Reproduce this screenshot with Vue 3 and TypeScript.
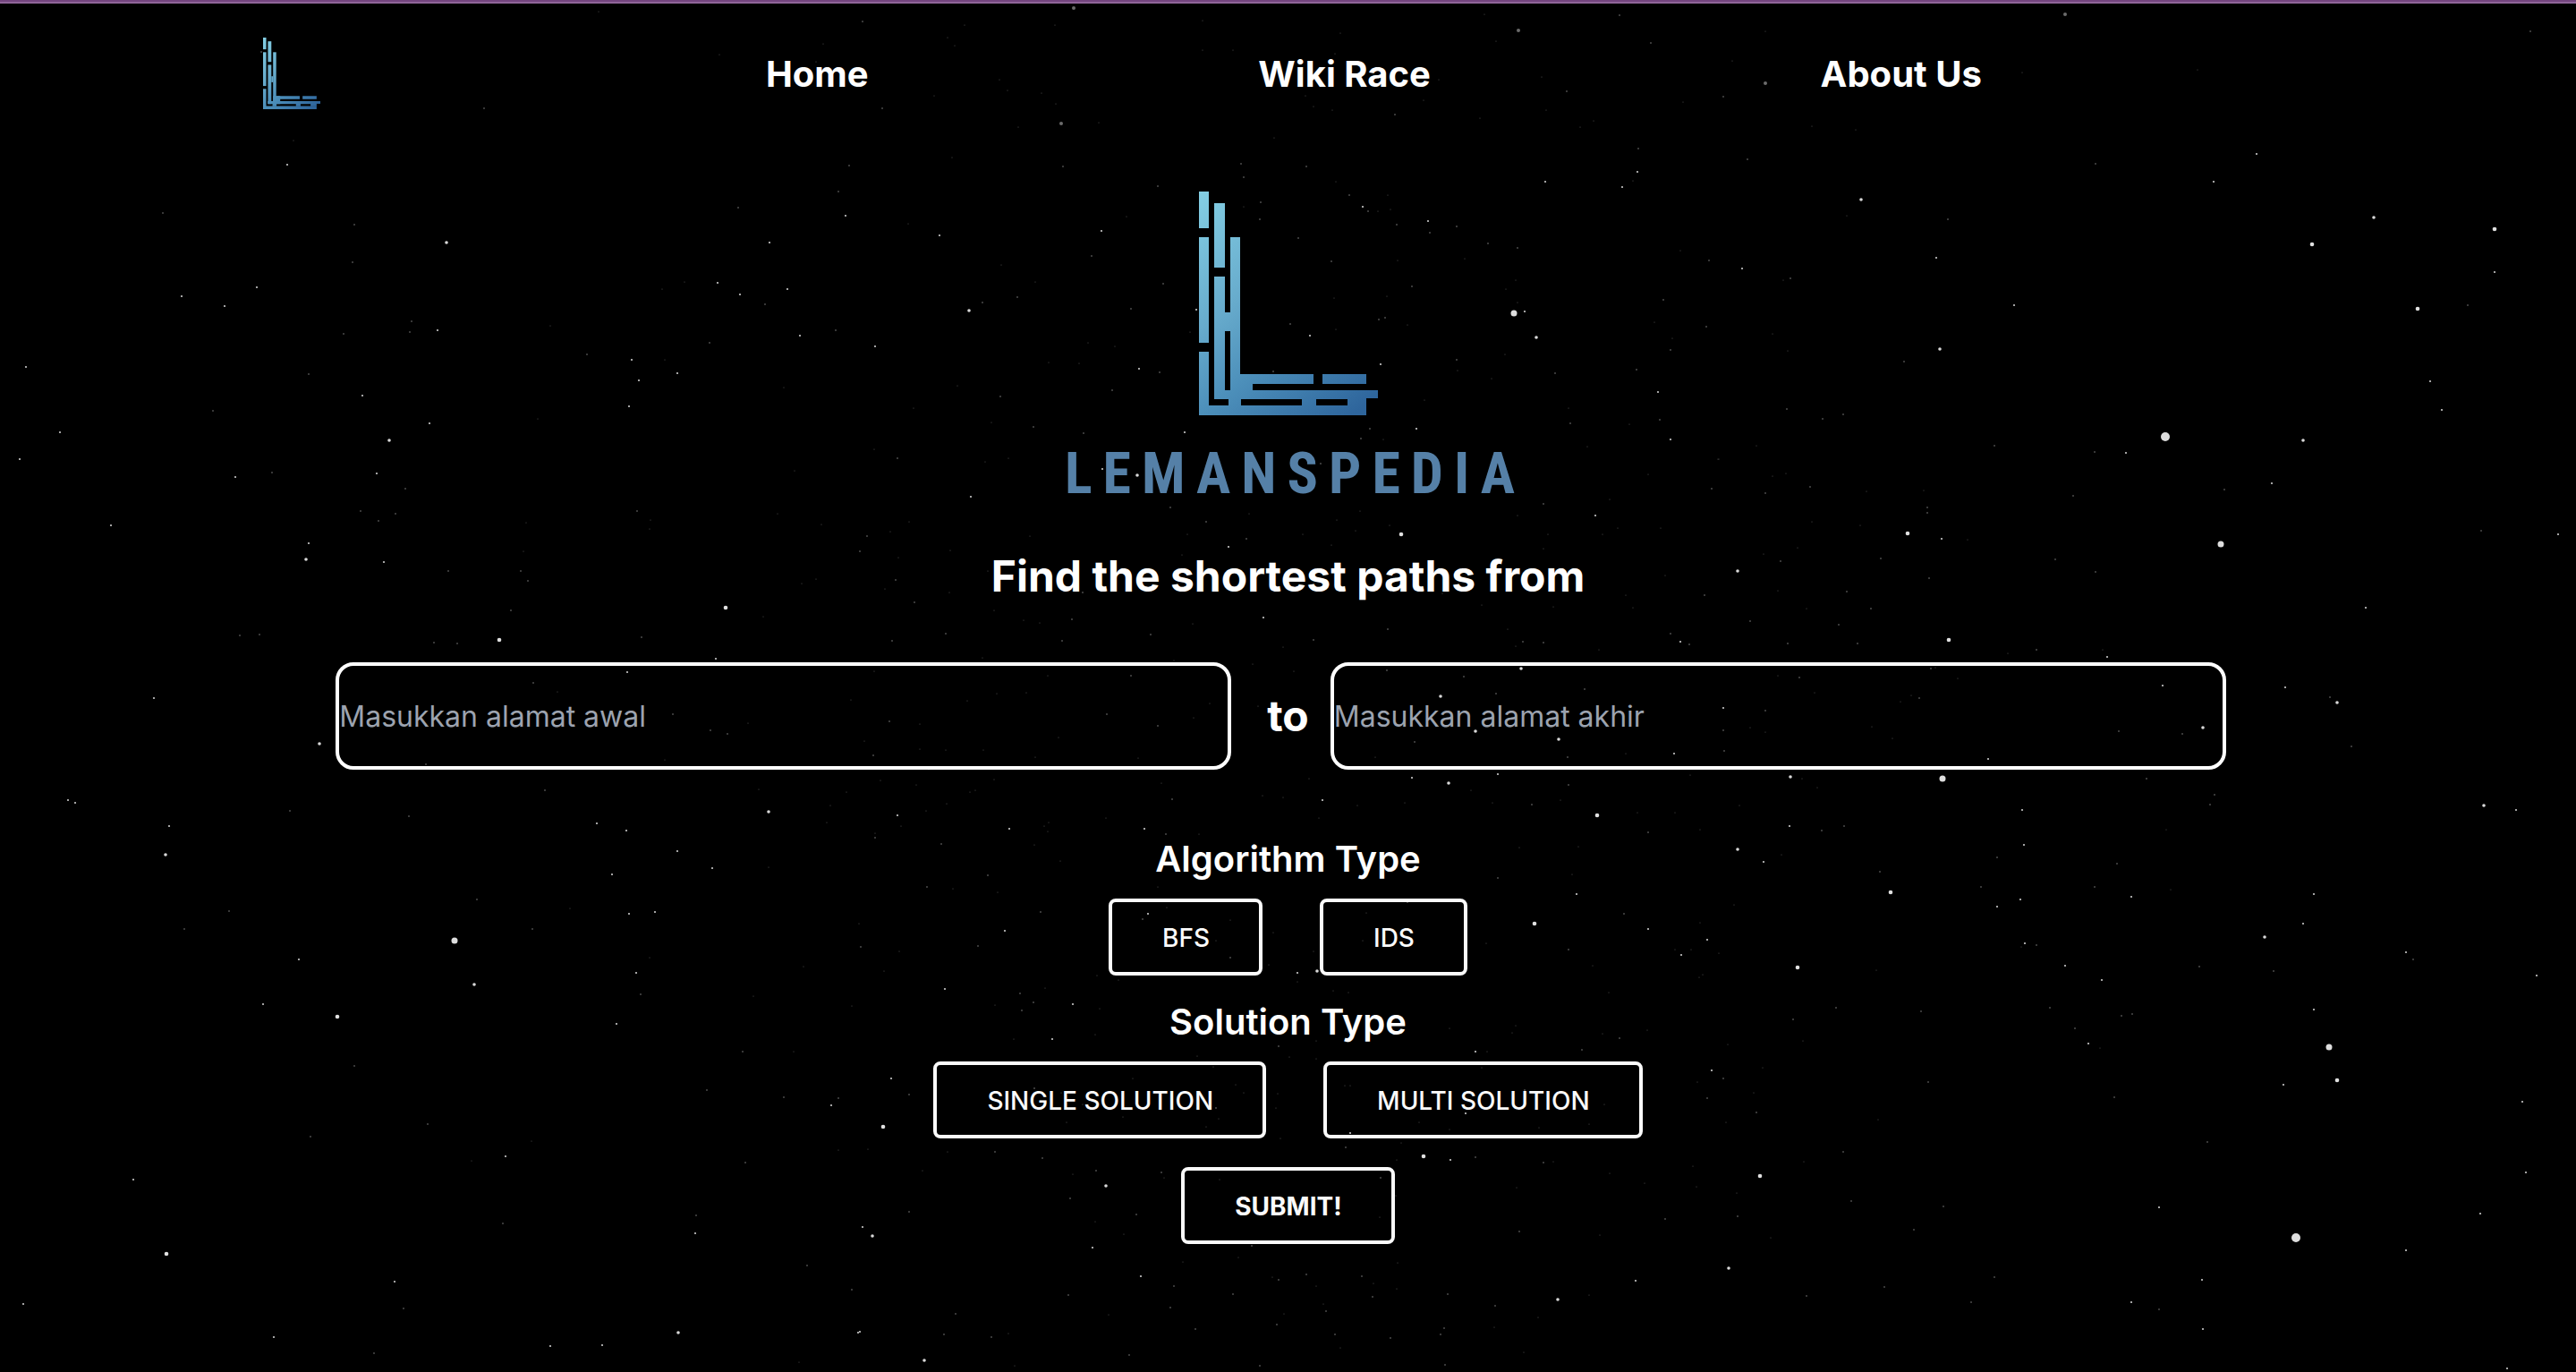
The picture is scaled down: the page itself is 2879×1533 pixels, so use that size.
<script setup lang="ts">
import { ref } from 'vue'

interface Star {
  x: number
  y: number
  r: number
  o: number
}

const from = ref('')
const to = ref('')
const algorithm = ref('')
const solution = ref('')

const links = [
  { label: 'Home', href: '#home' },
  { label: 'Wiki Race', href: '#wiki-race' },
  { label: 'About Us', href: '#about-us' },
]
const algorithms = ['BFS', 'IDS']
const solutions = ['SINGLE SOLUTION', 'MULTI SOLUTION']

// Bars of the emblem: x, y, width, height
const bars = [
  [0, 0, 11, 41], [0, 51, 11, 118], [0, 179, 11, 71],
  [17, 13, 12, 72], [17, 95, 12, 137], [35, 51, 11, 171],
  [29, 135, 6, 21], [46, 204, 82, 11], [138, 204, 49, 11],
  [35, 204, 25, 28], [17, 222, 183, 9], [17, 222, 170, 10],
  [0, 239, 187, 11], [33, 231, 14, 9], [115, 231, 16, 9], [166, 231, 21, 9],
]

// The sky is three tiles wide and two high. Each star is "x y magnitude" on a 1568-unit tile grid.
const GRID = 1568
const TILE_W = 960
const TILE_H = 766
const sky = [
  `1092 26 0,1503 101 0,1314 125 0,1489 141 0,477 118 1,883 247 1,535 321 0,524 377 2,1550 378 1,1530 438 1,1348 474 1,297 487 1,1543 494 2,646 513 1,815 555 3,1405 554 2,643 599 1,1250 644 0,1310 647 2,468 657 2,1208 662 0,1438 662 2,1350 674 2,331 678 2,410 700 2,1397 697 1,752 734 1,1005 746 0,798 755 2,748 760 1,627 764 1,1526 756 1,1460 768 2,1295 785 1,1072 810 1,1153 822 2,1213 823 0,48 839 2,1236 853 2,563 856 1,1166 870 2,1431 886 0,661 904 2,1148 929 2,389 939 1,982 958 0,784 968 2,109 989 2,710 1008 3,36 1050 2,1450 1076 0,497 1080 1,688 1083 2,430 1091 2,740 1118 1,658 1168 1,1163 1169 1,722 1174 1,1419 1174 0,1188 1190 0,691 1192 1,960 1195 0,1500 1199 0,203 1202 2,1186 1209 0,564 1242 2,955 1261 0,558 1280 3,701 1285 2,819 1305 1,950 1306 1,1490 1324 0,963 1328 1,1463 1335 0,1324 1389 4,933 1397 1,1394 1411 0,473 1451 1,437 1454 1,911 1463 4,1171 1458 1,792 1470 1,834 1471 1,1306 1507 2,1145 1537 2,973 1561 1`,
  `392 19 7,1142 32 0,1389 35 1,628 48 0,6 50 1,192 58 0,357 58 0,1204 69 7,879 75 0,162 85 0,1163 94 0,1445 99 1,174 104 0,628 115 0,682 115 0,869 122 0,1247 177 0,256 183 0,1058 183 0,271 206 0,1292 208 1,334 213 0,137 219 0,815 220 0,1031 230 0,1504 234 0,360 237 0,830 243 0,43 247 1,864 252 0,1255 252 0,979 262 1,1133 270 0,1341 277 0,438 281 0,369 283 7,290 290 0,1316 290 0,758 316 0,1423 339 1,170 361 0,698 374 1,372 380 1,817 380 1,1421 392 2,703 406 1,1413 413 0,871 416 0,1252 416 2,546 426 1,1393 428 2,895 447 1,965 447 0,733 462 1,702 472 0,919 473 2,970 480 0,947 484 0,929 484 1,488 496 0,731 502 1,1038 505 2,90 511 0,982 513 1,1091 517 1,442 529 2,1042 533 1,147 538 2,802 545 1,1149 557 1,1202 568 1,1500 573 0,424 586 1,1105 591 0,984 595 0,1552 595 1,863 597 1,259 606 0,1199 640 0,322 644 0,555 648 1,1009 656 1,1181 662 0,289 680 1,963 677 0,868 682 0,1468 685 1,225 692 1,1202 692 0,496 707 1,201 710 3,615 709 2,1215 713 2,1195 717 5,960 727 1,949 730 1,1452 737 0,787 740 1,1001 743 0,1547 747 1,871 753 0,604 760 0,824 768 2,1236 771 3,1484 773 0,418 783 0,467 792 0,30 793 2,1482 801 1,1180 810 0,1091 822 1,347 830 0,401 831 0,952 833 2,512 844 2,1419 846 1,756 850 1,1093 848 0,548 852 1,1270 854 1,1155 865 0,179 883 0,462 893 1,1458 897 2,258 906 1,1033 915 0,100 934 0,1296 934 0,241 967 0,1299 968 1,1406 970 0,1462 961 1,318 977 1,932 981 1,1017 981 2,594 988 2,410 990 1,1482 1005 2,917 1004 1,957 1006 0,1330 1021 0,27 1028 0,70 1048 1,272 1049 0,1568 1050 0,231 1057 0,445 1072 2,508 1087 3,842 1061 1,1440 1084 0,1556 1118 1,204 1137 2,1371 1143 0,1249 1153 1,568 1160 1,914 1169 0,712 1174 0,1202 1179 0,1344 1180 2,872 1190 0,91 1193 0,633 1193 1,968 1201 0,1385 1208 0,1464 1207 0,907 1213 0,57 1215 0,600 1223 0,810 1223 0,989 1222 4,1258 1223 0,1357 1222 0,14 1226 1,312 1226 0,708 1233 1,862 1246 0,674 1250 2,1249 1255 0,2 1260 1,167 1258 0,72 1275 0,590 1270 0,235 1306 0,1471 1316 0,67 1327 1,47 1347 0,409 1355 1,165 1356 0,1065 1358 0,1399 1361 0,1544 1362 1,102 1377 1,1137 1383 0,1268 1387 0,1413 1389 0,247 1397 0,739 1413 2,388 1417 1,301 1418 0,330 1425 0,610 1427 0,966 1439 1,1184 1440 0,158 1449 1,532 1451 1,1481 1450 1,61 1465 1,371 1465 1,829 1464 1,1499 1467 2,1212 1467 1,1250 1469 1,1515 1474 1,775 1479 0,1199 1477 0,1351 1487 0,226 1505 0,718 1518 0,575 1511 0,1209 1530 3,28 1535 0,793 1536 0,963 1534 1,496 1546 1,344 1546 0,1104 1547 1`,
  `633 33 7,87 71 0,1483 72 1,26 139 0,876 160 0,556 166 0,87 191 7,9 222 1,171 288 0,252 296 0,984 353 2,54 365 1,689 374 1,905 415 2,262 456 3,235 494 0,1198 497 3,419 501 1,1418 525 4,1085 558 4,398 589 2,44 615 2,1417 622 2,132 637 1,119 641 0,540 699 2,1368 699 1,1278 706 4,99 764 0,405 798 3,127 803 0,340 827 1,1300 871 2,125 936 1,1321 938 2,228 948 1,191 957 1,816 998 6,1068 1008 3,70 1019 0,504 1020 1,687 1033 1,744 1035 2,2 1050 0,124 1082 0,100 1090 0,1011 1105 2,169 1114 1,925 1119 1,271 1123 0,375 1122 0,86 1128 1,649 1135 1,382 1160 1,382 1172 1,172 1194 0,260 1201 0,1393 1214 1,347 1221 4,1533 1222 2,408 1233 2,456 1234 0,918 1245 5,145 1253 0,84 1268 0,298 1278 1,615 1280 1,115 1284 1,36 1306 3,689 1309 1,386 1323 1,110 1350 0,236 1353 1,1182 1390 2,161 1391 0,279 1391 1,58 1420 1,220 1428 1,422 1464 4,127 1471 1,254 1471 1,702 1486 0,582 1487 1,529 1494 0,710 1502 2,388 1530 1,397 1528 0,110 1545 0,148 1549 1,438 1552 0,811 1567 2`,
  `281 28 2,1018 14 0,1553 32 0,1229 66 1,1366 85 0,1297 103 1,1328 111 1,583 133 3,1214 170 0,777 180 1,994 240 1,1385 237 0,1545 244 0,124 262 2,137 269 2,1516 274 0,530 286 1,1403 289 3,746 298 1,1089 315 2,1509 314 0,308 321 2,1144 331 2,1237 379 2,302 387 3,1403 416 0,1300 418 2,1117 432 2,871 490 1,1040 510 0,418 515 1,1149 521 2,1195 517 2,972 556 1,336 557 1,829 583 5,1186 623 0,545 626 2,1466 643 0,1162 657 2,865 684 3,1170 707 1,1376 710 0,481 728 2,1555 732 0,616 757 4,1125 773 2,1355 838 1,1448 837 0,647 870 1,1290 925 1,1430 942 1,1530 943 1,1517 961 2,781 1003 1,567 1032 1,971 1042 0,1530 1062 0,923 1077 2,860 1087 0,1360 1091 1,244 1129 2,1271 1211 1,918 1230 1,1269 1253 2,304 1299 4,1473 1327 1,720 1364 2,1555 1381 1,43 1414 2,737 1424 1,1567 1479 2,1238 1481 3,499 1490 2,1005 1510 2,1100 1509 2,682 1528 1,1459 1548 0`,
  `1062 24 3,1163 19 1,251 19 0,305 17 0,1325 9 1,197 34 0,641 40 0,452 65 1,611 73 0,728 48 0,56 82 1,545 92 1,111 88 0,1125 104 3,1278 122 3,1015 128 1,364 119 0,9 127 0,111 146 0,158 147 0,227 148 0,26 159 1,321 163 0,510 165 0,943 164 0,1293 164 1,1399 156 0,1488 155 2,128 192 0,1166 203 2,1009 211 2,1518 204 0,246 214 0,822 213 0,39 217 0,1076 223 3,552 223 0,105 228 0,1296 228 1,213 240 0,202 244 0,1117 240 0,736 252 0,774 255 0,571 260 1,846 262 2,1281 262 0,160 271 0,1156 268 0,1229 273 1,909 275 0,997 268 0,122 287 0,71 296 2,1348 296 4,1421 291 0,1489 291 0,450 302 0,839 303 0,346 314 0,76 322 0,338 322 0,275 328 2,521 328 2,1535 330 0,345 333 0,1440 336 1,30 347 1,30 338 0,561 340 1,621 340 0,151 363 1,320 364 0,1313 369 0,1206 371 0,367 402 0,235 433 1,1301 432 0,1166 440 1,124 461 1,172 465 0,253 472 0,545 461 0,1310 476 2,1002 496 1,331 518 1,527 523 2,562 508 0,517 535 1,678 536 0,926 520 0,1397 522 1,0 545 0,1233 545 4,267 561 2,1535 542 0,1440 557 2,757 565 0,1548 582 2,4 597 1,218 596 1,1145 590 0,74 608 0,1296 603 1,1489 604 0,1519 604 0,1501 616 2,652 584 0,920 584 0,1340 640 0,678 623 1,830 608 0,748 638 0,46 653 0,837 653 3,801 658 2,1541 662 0,1534 667 0,800 678 0,156 694 2,435 663 0,474 673 0,340 692 0,865 698 0,893 703 0,1368 703 0,294 705 1,391 728 2,319 725 1,248 730 0,297 743 1,440 739 0,1078 785 0,1199 778 0,1358 796 0,1439 788 0,1193 795 0,353 808 2,282 809 0,432 799 0,1389 806 1,835 812 0,766 825 1,1125 837 2,1320 833 1,1147 838 0,785 850 0,834 853 0,618 848 0,1556 881 2,646 873 0,1136 874 0,58 899 2,500 898 0,687 912 0,887 914 0,896 914 0,1530 906 0,92 935 1,320 922 1,369 931 0,703 932 0,765 934 0,1216 925 1,1548 944 1,652 967 1,761 967 0,1360 959 0,408 957 0,1108 978 2,656 990 0,482 986 0,379 998 0,44 1009 4,1022 998 0,634 1010 0,1241 1012 0,1332 1003 0,1078 1016 0,897 1023 2,628 1034 1,770 1036 0,989 1047 0,16 1061 0,888 1056 1,161 1066 0,249 1066 1,1031 1077 4,335 1081 1,1079 1085 2,981 1085 0,1126 1078 1,1250 1092 1,1267 1090 0,1522 1100 0,116 1110 0,433 1110 1,552 1113 1,557 1126 0,1371 1115 0,390 1117 0,953 1125 1,658 1129 0,1434 1139 0,450 1144 3,1528 1146 0,1201 1149 0,386 1173 1,980 1166 0,92 1203 1,507 1209 1,951 1215 0,432 1226 0,1472 1221 1,6 1238 2,484 1254 0,1205 1248 1,25 1259 3,1353 1257 0,427 1285 2,717 1282 1,692 1308 0,984 1321 0,591 1318 0,817 1346 1,515 1352 2,918 1350 1,754 1354 0,766 1360 1,939 1367 0,1417 1361 2,575 1373 1,835 1373 0,982 1379 0,382 1393 1,683 1391 1,1074 1391 1,1332 1395 0,937 1399 1,1275 1404 3,847 1415 0,1162 1418 1,569 1423 1,853 1430 1,176 1436 1,776 1437 0,455 1439 0,1239 1446 0,762 1461 1,614 1471 1,1159 1467 0,1069 1470 1,1 1478 2,155 1484 1,273 1482 0,869 1485 1,1062 1485 1,242 1491 1,971 1493 1,878 1514 0,1214 1526 0,493 1531 1,119 1543 3,1070 1553 1,732 1555 1,284 1555 0`,
  `1035 4 2,1117 27 1,1131 38 3,176 17 0,352 23 0,367 28 1,334 36 0,10 52 2,87 57 1,59 96 0,9 103 1,86 107 0,281 95 0,886 97 3,731 105 1,848 110 1,318 120 0,1156 139 1,11 150 1,493 168 2,133 209 3,154 212 0,410 212 5,783 213 1,181 234 0,906 250 1,899 272 1,40 274 0,1398 275 3,1457 284 2,555 284 2,131 321 2,231 321 1,190 332 1,818 330 0,558 364 2,36 374 3,116 387 0,509 393 1,83 404 2,729 408 1,295 425 1,481 461 1,688 461 1,826 467 0,315 472 4,1087 476 2,755 484 2,552 489 2,29 502 0,509 506 2,1069 544 2,998 575 3,560 589 2,581 594 1,553 597 0,2 612 0,1256 611 2,1269 626 1,634 640 2,879 642 1,145 644 4,289 651 0,1014 654 1,1495 663 2,700 674 2,216 737 1,606 736 1,1087 740 2,371 746 1,757 751 1,736 755 1,138 764 1,651 785 1,155 812 0,18 821 0,677 819 2,1116 827 5,697 829 0,81 874 0,9 898 1,1130 903 4,384 907 1,1033 913 2,66 931 0,723 941 1,1468 951 2,70 976 1,292 992 0,15 998 0,893 1043 1,229 1066 1,157 1088 0,1475 1114 2,76 1121 4,34 1160 0,244 1179 1,411 1191 1,805 1193 2,1391 1208 2,36 1213 1,357 1244 1,1055 1262 6,96 1264 0,1256 1292 2,20 1333 3,504 1354 1,883 1360 2,303 1375 1,162 1397 1,754 1411 2,463 1411 1,806 1426 1,885 1472 2,1440 1561 2`,
]

// Radius and opacity by magnitude, faintest first; the last one is a dimmed star near the top edge
const magnitudes = [
  [0.6, 0.32], [0.8, 0.5], [1.1, 0.8], [1.8, 0.85], [2.3, 0.88], [3.5, 0.87], [5, 0.87], [2, 0.42],
]

const stars: Star[] = sky.flatMap((tile, i) =>
  tile.split(',').map((entry) => {
    const [x, y, m] = entry.split(' ').map(Number)
    return {
      x: Math.round((i % 3) * TILE_W + (x / GRID) * TILE_W),
      y: Math.round(Math.floor(i / 3) * TILE_H + (y / GRID) * TILE_H),
      r: magnitudes[m][0],
      o: magnitudes[m][1],
    }
  }),
)
</script>

<template>
  <div class="page">
    <svg class="sky" viewBox="0 0 2879 1533" preserveAspectRatio="xMidYMid slice" aria-hidden="true">
      <circle v-for="(s, i) in stars" :key="i" :cx="s.x" :cy="s.y" :r="s.r" :fill-opacity="s.o" fill="#fff" />
    </svg>

    <svg class="defs" aria-hidden="true">
      <defs>
        <linearGradient id="ice" gradientUnits="userSpaceOnUse" x1="0" y1="0" x2="190" y2="235">
          <stop offset="0" stop-color="#84cfe4" />
          <stop offset="0.4" stop-color="#67abcc" />
          <stop offset="0.65" stop-color="#4c8fba" />
          <stop offset="1" stop-color="#2e659c" />
        </linearGradient>
      </defs>
    </svg>

    <div class="strip"></div>

    <header>
      <nav class="nav">
        <a class="brand" href="#home" aria-label="Lemanspedia">
          <svg class="brand-mark" viewBox="0 0 200 250">
            <rect v-for="(b, i) in bars" :key="i" :x="b[0]" :y="b[1]" :width="b[2]" :height="b[3]" fill="url(#ice)" />
          </svg>
        </a>
        <a v-for="link in links" :key="link.label" class="link" :href="link.href">{{ link.label }}</a>
      </nav>
    </header>

    <main class="main">
      <svg class="emblem" viewBox="0 0 200 250" aria-hidden="true">
        <rect v-for="(b, i) in bars" :key="i" :x="b[0]" :y="b[1]" :width="b[2]" :height="b[3]" fill="url(#ice)" />
      </svg>
      <h1 class="wordmark">LEMANSPEDIA</h1>

      <form class="form" @submit.prevent>
        <label class="lead" for="from">Find the shortest paths from</label>
        <div class="route">
          <input id="from" v-model="from" class="field" type="text" placeholder="Masukkan alamat awal" />
          <label class="to" for="to">to</label>
          <input id="to" v-model="to" class="field" type="text" placeholder="Masukkan alamat akhir" />
        </div>

        <section class="group" aria-labelledby="algorithm-title">
          <h2 id="algorithm-title" class="title">Algorithm Type</h2>
          <div class="options">
            <button v-for="a in algorithms" :key="a" class="btn" type="button" :aria-pressed="algorithm === a" @click="algorithm = a">{{ a }}</button>
          </div>
        </section>

        <section class="group" aria-labelledby="solution-title">
          <h2 id="solution-title" class="title">Solution Type</h2>
          <div class="options">
            <button v-for="s in solutions" :key="s" class="btn" type="button" :aria-pressed="solution === s" @click="solution = s">{{ s }}</button>
          </div>
        </section>

        <button class="btn submit" type="submit">SUBMIT!</button>
      </form>
    </main>
  </div>
</template>

<style>
body {
  background: #000;
}
</style>

<style scoped>
.page {
  position: relative;
  min-height: 100vh;
  overflow: hidden;
  background: #000;
  color: #fff;
  font-family: Inter, 'Liberation Sans', sans-serif;
}

.sky {
  position: absolute;
  inset: 0;
  width: 100%;
  height: 100%;
}

.defs {
  position: absolute;
  width: 0;
  height: 0;
}

.strip {
  position: relative;
  height: 4px;
  background: linear-gradient(#74457f 50%, #8f6599 50%);
}

.nav {
  position: relative;
  display: flex;
  align-items: center;
  justify-content: space-between;
  height: 156px;
  padding: 0 calc(23% + 2px) 0 calc(8% + 2px);
}

.brand {
  display: flex;
  justify-content: center;
  width: 188px;
}

.brand-mark {
  width: 64px;
  height: 80px;
}

.link {
  padding-top: 2px;
  color: #fff;
  font-size: 40px;
  font-weight: 700;
  line-height: 56px;
  text-decoration: none;
}

.main {
  position: relative;
  display: flex;
  flex-direction: column;
  align-items: center;
  padding: 54px 0 140px;
}

.emblem {
  width: 200px;
  height: 250px;
}

.wordmark {
  margin: 30px 0 42px;
  padding-left: 16px;
  color: #5580a7;
  font-family: 'Liberation Sans Narrow', 'Roboto Condensed', Roboto, sans-serif;
  font-size: 64px;
  font-weight: 700;
  line-height: 72px;
  letter-spacing: 12px;
}

.form {
  display: flex;
  flex-direction: column;
  align-items: center;
  width: 100%;
}

.lead,
.to {
  font-size: 48px;
  font-weight: 700;
  line-height: 72px;
}

.route {
  display: flex;
  align-items: center;
  gap: 24px;
  box-sizing: border-box;
  width: calc(74% - 2px);
  margin: 60px 0 72px;
}

.field {
  flex: 1;
  box-sizing: border-box;
  min-width: 0;
  height: 120px;
  margin: 0 16px 0 0;
  padding: 0;
  border: 4px solid #fff;
  border-radius: 20px;
  background: transparent;
  color: #fff;
  font-family: inherit;
  font-size: 32px;
}

.field::placeholder {
  color: #9ca3af;
  opacity: 1;
}

.group {
  display: flex;
  flex-direction: column;
  align-items: center;
  gap: 16px;
  margin-bottom: 24px;
}

.title {
  margin: 0;
  font-size: 40px;
  font-weight: 600;
  line-height: 56px;
}

.options {
  display: flex;
  gap: 64px;
}

.btn {
  padding: 21px 55px 19px 56px;
  border: 4px solid #fafafa;
  border-radius: 8px;
  background: transparent;
  color: #fafafa;
  font-family: inherit;
  font-size: 28px;
  font-weight: 500;
  line-height: 38px;
}

.submit {
  margin-top: 8px;
  font-weight: 700;
}
</style>
